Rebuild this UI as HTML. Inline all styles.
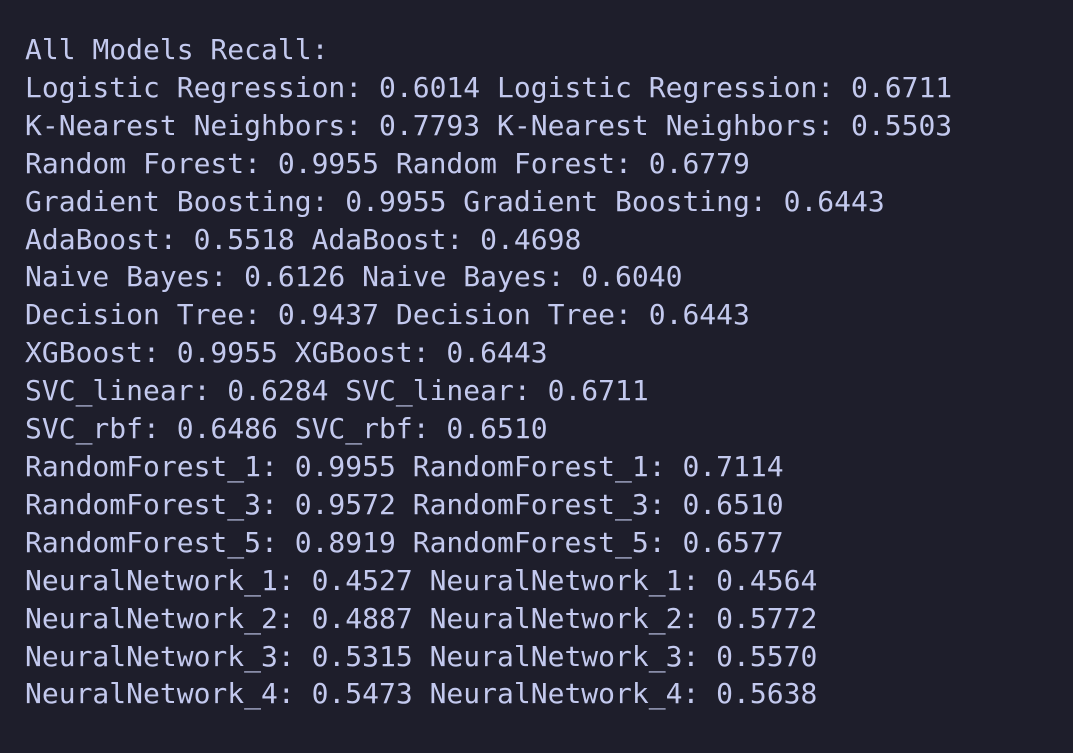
<!DOCTYPE html>
<html><head><style>
html,body{margin:0;padding:0;background:#1e1e2b;width:1073px;height:753px;overflow:hidden}
pre{margin:0;position:absolute;left:25px;top:31px;font-family:"DejaVu Sans Mono","Liberation Mono",monospace;font-size:28px;line-height:37.9px;color:#c3c9ee}
</style></head><body>
<pre>All Models Recall:
Logistic Regression: 0.6014 Logistic Regression: 0.6711
K-Nearest Neighbors: 0.7793 K-Nearest Neighbors: 0.5503
Random Forest: 0.9955 Random Forest: 0.6779
Gradient Boosting: 0.9955 Gradient Boosting: 0.6443
AdaBoost: 0.5518 AdaBoost: 0.4698
Naive Bayes: 0.6126 Naive Bayes: 0.6040
Decision Tree: 0.9437 Decision Tree: 0.6443
XGBoost: 0.9955 XGBoost: 0.6443
SVC_linear: 0.6284 SVC_linear: 0.6711
SVC_rbf: 0.6486 SVC_rbf: 0.6510
RandomForest_1: 0.9955 RandomForest_1: 0.7114
RandomForest_3: 0.9572 RandomForest_3: 0.6510
RandomForest_5: 0.8919 RandomForest_5: 0.6577
NeuralNetwork_1: 0.4527 NeuralNetwork_1: 0.4564
NeuralNetwork_2: 0.4887 NeuralNetwork_2: 0.5772
NeuralNetwork_3: 0.5315 NeuralNetwork_3: 0.5570
NeuralNetwork_4: 0.5473 NeuralNetwork_4: 0.5638</pre>
</body></html>
